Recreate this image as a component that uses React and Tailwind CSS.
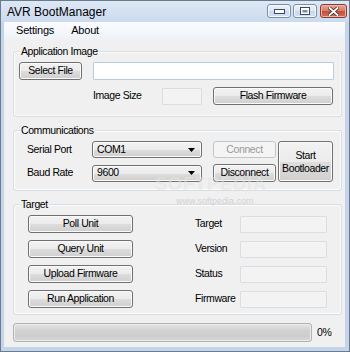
import React from "react";

const btnCls =
  "flex items-center justify-center rounded-[3px] border border-[#707070] bg-[linear-gradient(#f2f2f2_0%,#ebebeb_50%,#dddddd_51%,#cfcfcf_100%)] shadow-[inset_0_0_0_1px_#fbfbfb] text-[#000]";

function Btn({ className = "", children }) {
  return <div className={`${btnCls} ${className}`}>{children}</div>;
}

function Combo({ value }) {
  return (
    <div className={`${btnCls} w-[110px] h-[17px] !justify-between pl-[4px] pr-[6px]`}>
      <span>{value}</span>
      <svg width="7" height="4" viewBox="0 0 7 4">
        <path d="M0 0 H7 L3.5 4 Z" fill="#000" />
      </svg>
    </div>
  );
}

function Box({ className = "" }) {
  return <div className={`border border-[#dadde2] bg-[#f3f3f3] rounded-[1px] ${className}`} />;
}

function Group({ label, className = "", children }) {
  return (
    <div
      className={`relative ml-[9px] w-[329px] rounded-[3px] border border-[#d5dfe5] shadow-[inset_0_0_0_1px_#fbfcfd] ${className}`}
    >
      <div className="absolute left-[6px] -top-[8px] bg-[#f0f0f0] px-[1px] leading-[14px]">{label}</div>
      {children}
    </div>
  );
}

function WinBtn({ className = "", children }) {
  return (
    <div className={`flex items-center justify-center rounded-[3px] h-[14px] ${className}`}>{children}</div>
  );
}

export default function App() {
  return (
    <div className="relative w-[350px] h-[352px] overflow-hidden bg-[#c4d5eb] border border-[#6b7a8c] font-['Liberation_Sans',sans-serif] text-[10.5px] tracking-[-0.4px] text-black">
      {/* Title bar */}
      <div className="flex h-[21px] bg-[linear-gradient(#dde8f5,#cbdaee)]">
        <div className="ml-[6px] mt-[4px] text-[12px] tracking-[0px] leading-[14px] text-black">AVR BootManager</div>
        <div className="ml-auto mr-[2px] mt-[3px] flex gap-[2px]">
          <WinBtn className="w-[24px] border border-[#7b8ea8] bg-[linear-gradient(#eef3fa_0%,#dbe5f2_50%,#c9d8ec_51%,#d3e0f1_100%)] shadow-[inset_0_0_0_1px_#f5f8fc]">
            <svg width="11" height="5" viewBox="0 0 11 5">
              <rect x="0.5" y="0.5" width="10" height="4" fill="#fff" stroke="#3b4a5e" />
            </svg>
          </WinBtn>
          <WinBtn className="w-[24px] border border-[#7b8ea8] bg-[linear-gradient(#eef3fa_0%,#dbe5f2_50%,#c9d8ec_51%,#d3e0f1_100%)] shadow-[inset_0_0_0_1px_#f5f8fc]">
            <svg width="10" height="8" viewBox="0 0 10 8">
              <rect x="0.5" y="0.5" width="9" height="7" fill="#fff" stroke="#3b4a5e" />
              <rect x="2.5" y="3" width="5" height="2.5" fill="#7d8da2" />
            </svg>
          </WinBtn>
          <WinBtn className="w-[27px] ml-[1px] border border-[#8a3a2e] bg-[linear-gradient(#e8a597_0%,#d77a68_50%,#c64d3a_51%,#d0705c_100%)] shadow-[inset_0_0_0_1px_#eeb3a6]">
            <svg width="11" height="9" viewBox="0 0 11 9">
              <path d="M1.5 1 L9.5 8 M9.5 1 L1.5 8" stroke="#4a2a26" strokeWidth="3.4" strokeLinecap="square" />
              <path d="M1.5 1 L9.5 8 M9.5 1 L1.5 8" stroke="#fff" strokeWidth="1.8" strokeLinecap="square" />
            </svg>
          </WinBtn>
        </div>
      </div>

      {/* Client area */}
      <div className="ml-[3px] w-[341px] h-[325px] bg-[#f0f0f0] flex flex-col">
        {/* Menu bar */}
        <div className="h-[17px] flex items-center bg-[linear-gradient(#fbfcfe,#eef2f8)] text-[11px] tracking-[-0.2px]">
          <span className="ml-[12px]">Settings</span>
          <span className="ml-[17px]">About</span>
        </div>

        {/* Application Image */}
        <Group label="Application Image" className="mt-[12px] h-[66px] pt-[9px] pl-[5px]">
          <div className="flex items-center h-[19px]">
            <Btn className="w-[63px] h-[18px]">Select File</Btn>
            <div className="ml-[11px] w-[241px] h-[18px] mt-[1px] border border-[#b9cbdf] bg-white rounded-[1px]" />
          </div>
          <div className="flex items-center mt-[7px] h-[18px]">
            <span className="ml-[74px] w-[69px]">Image Size</span>
            <Box className="w-[40px] h-[17px]" />
            <Btn className="ml-[11px] w-[120px] h-[18px]">Flash Firmware</Btn>
          </div>
        </Group>

        {/* Communications */}
        <Group label="Communications" className="mt-[13px] h-[61px] pt-[10px] pl-[13px]">
          <div className="flex">
            <div className="flex flex-col gap-[6px]">
              <div className="flex items-center h-[17px]">
                <span className="w-[65px]">Serial Port</span>
                <Combo value="COM1" />
              </div>
              <div className="flex items-center h-[18px]">
                <span className="w-[65px]">Baud Rate</span>
                <Combo value="9600" />
              </div>
            </div>
            <div className="ml-[11px] flex flex-col gap-[6px]">
              <div className="w-[63px] h-[17px] flex items-center justify-center rounded-[3px] border border-[#c3c6c9] bg-[#f4f4f4] text-[#9a9a9a]">
                Connect
              </div>
              <Btn className="w-[63px] h-[18px]">Disconnect</Btn>
            </div>
            <Btn className="ml-[2px] w-[55px] h-[41px] leading-[13px] text-center flex-col">
              <span>Start</span>
              <span>Bootloader</span>
            </Btn>
          </div>
        </Group>

        {/* Target */}
        <Group label="Target" className="mt-[13px] h-[111px] pt-[10px] pl-[14px]">
          <div className="flex flex-col gap-[7px]">
            {[
              ["Poll Unit", "Target"],
              ["Query Unit", "Version"],
              ["Upload Firmware", "Status"],
              ["Run Application", "Firmware"],
            ].map(([b, l]) => (
              <div key={b} className="flex items-center h-[18px]">
                <Btn className="w-[105px] h-[18px]">{b}</Btn>
                <span className="ml-[62px] w-[45px]">{l}</span>
                <Box className="w-[87px] h-[17px]" />
              </div>
            ))}
          </div>
        </Group>

        {/* Progress */}
        <div className="mt-[8px] ml-[9px] flex items-center">
          <div className="w-[299px] h-[19px] rounded-[3px] border border-[#b2b2b2] bg-[linear-gradient(#e4e4e4,#d3d3d3_35%,#cdcdcd_70%,#d8d8d8)] shadow-[inset_0_0_0_1px_#ececec]" />
          <span className="ml-[5px]">0%</span>
        </div>
      </div>

      {/* Watermark overlay */}
      <div className="pointer-events-none absolute left-[154px] top-[174px] text-[18px] font-bold tracking-[1px] text-[#e4e4e4] opacity-50 leading-none">
        SOFTPEDIA
      </div>
      <div className="pointer-events-none absolute left-[175px] top-[196px] text-[9px] tracking-[0px] text-[#d2d2d2] leading-none">
        www.softpedia.com
      </div>
    </div>
  );
}
